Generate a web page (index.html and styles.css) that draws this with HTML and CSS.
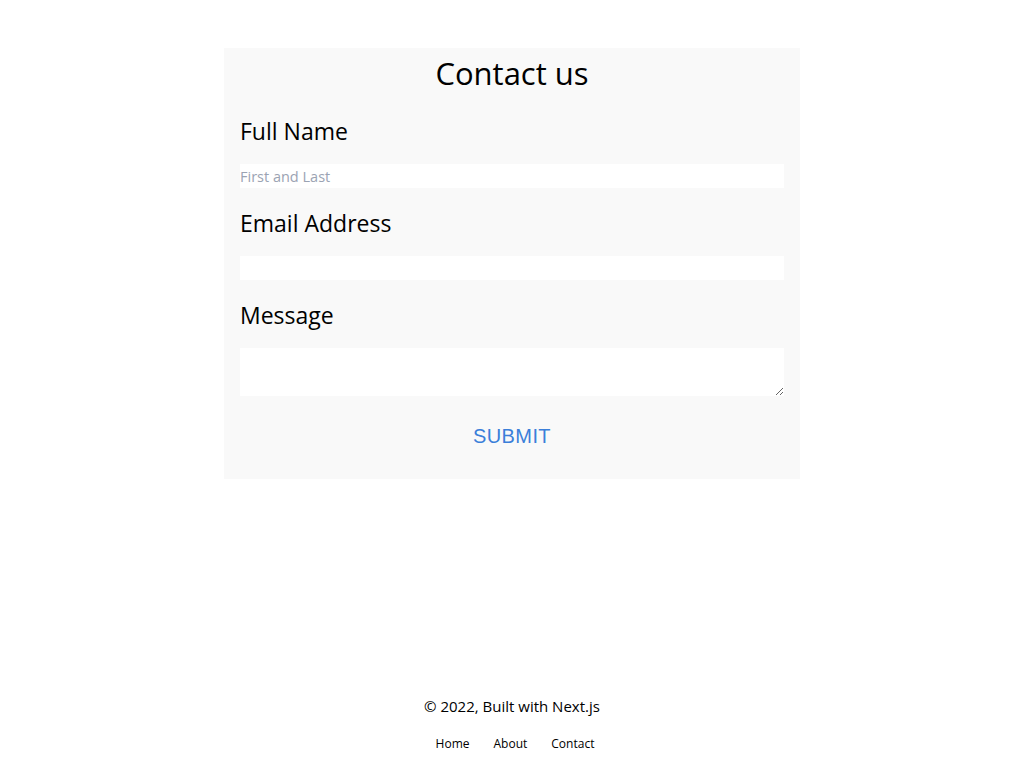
FILE: index.html
```html
<!DOCTYPE html>
<html lang="en">
<head>
<meta charset="utf-8">
<title>Contact us</title>
<link rel="stylesheet" href="styles.css">
</head>
<body>
<div class="page">
  <main class="main">
    <form class="card">
      <h1 class="title">Contact us</h1>
      <label class="label" for="name">Full Name</label>
      <input class="field" id="name" type="text" placeholder="First and Last">
      <label class="label" for="email">Email Address</label>
      <input class="field" id="email" type="email">
      <label class="label" for="msg">Message</label>
      <textarea class="field area" id="msg"></textarea>
      <button class="submit" type="button">SUBMIT</button>
    </form>
  </main>
  <footer class="footer">
    <p class="copy">© 2022, Built with Next.js</p>
    <nav class="links">
      <a class="link" href="#">Home</a>
      <a class="link" href="#">About</a>
      <a class="link" href="#">Contact</a>
    </nav>
  </footer>
</div>
</body>
</html>
```
FILE: styles.css
```css
html, body {
  margin: 0;
  padding: 0;
  background: #ffffff;
}
body {
  font-family: "Open Sans", "Noto Sans", sans-serif;
  color: #000;
}
.page {
  min-height: 768px;
  display: flex;
  flex-direction: column;
}
.main {
  flex: 1;
  display: flex;
  justify-content: center;
  padding-top: 48px;
}
.card {
  width: 576px;
  box-sizing: border-box;
  background: #f9f9f9;
  padding: 0 16px 31px;
  display: flex;
  flex-direction: column;
  align-self: flex-start;
}
.title {
  margin: 0;
  font-size: 31px;
  font-weight: 400;
  line-height: 50px;
  text-align: center;
}
.label {
  display: block;
  font-size: 23px;
  line-height: 36px;
  margin: 15px 0 15px;
}
.field {
  display: block;
  width: 100%;
  box-sizing: border-box;
  height: 24px;
  border: none;
  outline: none;
  background: #fff;
  padding: 0;
  margin: 0;
  font-family: "Open Sans", "Noto Sans", sans-serif;
  font-size: 14.5px;
  color: #000;
}
.field + .label {
  margin-top: 17px;
}
.field::placeholder {
  color: #9ba3b3;
}
.area {
  height: 48px;
  resize: vertical;
}
.submit {
  align-self: center;
  margin-top: 29px;
  padding: 0;
  border: none;
  background: transparent;
  font-family: "Liberation Sans", Arial, sans-serif;
  font-size: 20px;
  line-height: 23px;
  color: #3b7fd9;
  letter-spacing: 0.4px;
  cursor: pointer;
}
.footer {
  display: flex;
  flex-direction: column;
  align-items: center;
  padding-bottom: 15px;
}
.copy {
  margin: 0;
  font-size: 15px;
  line-height: 22px;
}
.links {
  display: flex;
  gap: 24px;
  margin-top: 18px;
  padding-left: 6px;
}
.link {
  font-size: 12px;
  line-height: 18px;
  color: #000;
  text-decoration: none;
}
```
